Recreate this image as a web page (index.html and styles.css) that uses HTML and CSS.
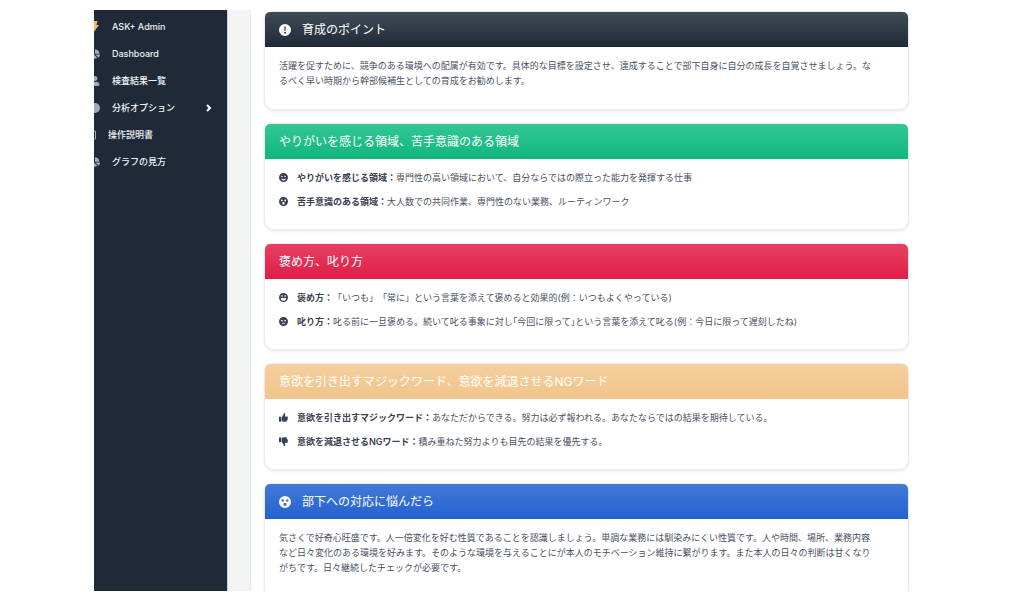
FILE: index.html
```html
<!DOCTYPE html>
<html lang="ja">
<head>
<meta charset="utf-8">
<title>ASK+ Admin</title>
<link rel="stylesheet" href="styles.css">
</head>
<body>
<svg class="defs" aria-hidden="true">
  <symbol id="pie" viewBox="0 0 544 512"><path d="M527.79 288H290.5l158.03 158.03c6.04 6.04 15.98 6.53 22.19.68 38.7-36.46 65.32-85.61 73.13-140.86 1.34-9.46-6.51-17.85-16.06-17.85zm-15.83-64.8C503.72 103.74 408.26 8.28 288.8.04 279.68-.59 272 7.1 272 16.24V240h223.77c9.14 0 16.82-7.68 16.19-16.8zM224 288V50.71c0-9.55-8.39-17.4-17.84-16.06C86.99 51.49-4.1 155.6.14 280.37 4.5 408.51 114.83 513.59 243.03 511.98c50.4-.63 96.97-16.87 135.26-44.03 7.9-5.6 8.42-17.23 1.57-24.08L224 288z"/></symbol>
  <symbol id="user" viewBox="0 0 448 512"><path d="M224 256c70.7 0 128-57.3 128-128S294.7 0 224 0 96 57.3 96 128s57.3 128 128 128zm89.6 32h-16.7c-22.2 10.2-46.9 16-72.9 16s-50.6-5.8-72.9-16h-16.7C60.2 288 0 348.2 0 422.4V464c0 26.5 21.5 48 48 48h352c26.5 0 48-21.5 48-48v-41.6c0-74.2-60.2-134.4-134.4-134.4z"/></symbol>
  <symbol id="bolt" viewBox="0 0 10 12"><path d="M3 0h5.500L7.500 4H10L4 12 5 7H1.500z"/></symbol>
  <symbol id="disc" viewBox="0 0 10 10"><circle cx="5" cy="5" r="5"/></symbol>
  <symbol id="book" viewBox="0 0 10 10"><path d="M2 1h7.500v8H2z" fill="none" stroke="currentColor"/></symbol>
  <symbol id="exclaim" viewBox="0 0 24 24"><path fill-rule="evenodd" d="M12 0a12 12 0 1 0 0 24 12 12 0 0 0 0-24zM10.500 5h3l-.5 9h-2zM12 15.500a2 2 0 1 1 0 4 2 2 0 0 1 0-4z"/></symbol>
  <symbol id="smile" viewBox="0 0 24 24"><path fill-rule="evenodd" d="M12 0a12 12 0 1 0 0 24 12 12 0 0 0 0-24zM8 7a2 2 0 1 1 0 4 2 2 0 0 1 0-4zM16 7a2 2 0 1 1 0 4 2 2 0 0 1 0-4zM5.500 14.500q6.500 4 13 0-1.500 5.500-6.500 5.500t-6.500-5.500z"/></symbol>
  <symbol id="surprise" viewBox="0 0 24 24"><path fill-rule="evenodd" d="M12 0a12 12 0 1 0 0 24 12 12 0 0 0 0-24zM7.500 6.500a2.500 2.500 0 1 1 0 5 2.500 2.500 0 0 1 0-5zM16.500 6.500a2.500 2.500 0 1 1 0 5 2.500 2.500 0 0 1 0-5zM12 13.500a3.200 3.200 0 1 1 0 6.400 3.200 3.200 0 0 1 0-6.400z"/></symbol>
  <symbol id="grin" viewBox="0 0 24 24"><path fill-rule="evenodd" d="M12 0a12 12 0 1 0 0 24 12 12 0 0 0 0-24zM5 7.500q3-3 5.500 0v2H5zM13.500 7.500q3-3 5.500 0v2h-5.500zM4.500 13h15q-1 7.500-7.500 7.500T4.500 13z"/></symbol>
  <symbol id="angry" viewBox="0 0 24 24"><path fill-rule="evenodd" d="M12 0a12 12 0 1 0 0 24 12 12 0 0 0 0-24zM5 7l5.500 2.500q-.5 3-2.500 3t-2.500-3zM19 7l-5.500 2.500q.5 3 2.500 3t2.500-3zM7.500 18q4.500-5 9 0l-1 1q-3.500-3-7 0z"/></symbol>
  <symbol id="thumb" viewBox="0 0 24 24"><path d="M0 10h5.500v13H0zM7 11l4.500-5.500 1-4Q13-1 15.500 1q2.500 2.500 0 8H22q3 1.500 1 4 1.500 2-.5 4 .5 2-1.500 3 0 3.500-3 3.500h-5q-3 0-6-2z"/></symbol>
</svg>
<div class="app">
  <nav class="sidebar">
    <a class="nav-link brand" href="#"><svg class="nav-icon"><use href="#bolt"/></svg>ASK+ Admin</a>
    <a class="nav-link" href="#"><svg class="nav-icon"><use href="#pie"/></svg>Dashboard</a>
    <a class="nav-link" href="#"><svg class="nav-icon"><use href="#user"/></svg>検査結果一覧</a>
    <a class="nav-link" href="#"><svg class="nav-icon"><use href="#disc"/></svg>分析オプション<svg class="chevron" viewBox="0 0 6 8"><path d="M1 1l3 3-3 3"/></svg></a>
    <a class="nav-link compact" href="#"><svg class="nav-icon"><use href="#book"/></svg>操作説明書</a>
    <a class="nav-link" href="#"><svg class="nav-icon"><use href="#pie"/></svg>グラフの見方</a>
  </nav>
  <div class="gutter"></div>
  <main class="content">
    <section class="card">
      <h2 class="card-header dark"><svg class="head-icon"><use href="#exclaim"/></svg>育成のポイント</h2>
      <div class="card-body">
        <p class="prose">活躍を促すために、競争のある環境への配属が有効です。具体的な目標を設定させ、達成することで部下自身に自分の成長を自覚させましょう。なるべく早い時期から幹部候補生としての育成をお勧めします。</p>
      </div>
    </section>
    <section class="card">
      <h2 class="card-header green">やりがいを感じる領域、苦手意識のある領域</h2>
      <ul class="card-body">
        <li><svg class="item-icon"><use href="#smile"/></svg><span><b>やりがいを感じる領域：</b>専門性の高い領域において、自分ならではの際立った能力を発揮する仕事</span></li>
        <li><svg class="item-icon"><use href="#surprise"/></svg><span><b>苦手意識のある領域：</b>大人数での共同作業、専門性のない業務、ルーティンワーク</span></li>
      </ul>
    </section>
    <section class="card">
      <h2 class="card-header red">褒め方、叱り方</h2>
      <ul class="card-body">
        <li><svg class="item-icon"><use href="#grin"/></svg><span><b>褒め方：</b>「いつも」「常に」という言葉を添えて褒めると効果的(例：いつもよくやっている)</span></li>
        <li><svg class="item-icon"><use href="#angry"/></svg><span><b>叱り方：</b>叱る前に一旦褒める。続いて叱る事象に対し｢今回に限って｣という言葉を添えて叱る(例：今日に限って遅刻したね)</span></li>
      </ul>
    </section>
    <section class="card">
      <h2 class="card-header sand">意欲を引き出すマジックワード、意欲を減退させるNGワード</h2>
      <ul class="card-body">
        <li><svg class="item-icon"><use href="#thumb"/></svg><span><b>意欲を引き出すマジックワード：</b>あなただからできる。努力は必ず報われる。あなたならではの結果を期待している。</span></li>
        <li><svg class="item-icon down"><use href="#thumb"/></svg><span><b>意欲を減退させるNGワード：</b>積み重ねた努力よりも目先の結果を優先する。</span></li>
      </ul>
    </section>
    <section class="card">
      <h2 class="card-header blue"><svg class="head-icon"><use href="#surprise"/></svg>部下への対応に悩んだら</h2>
      <div class="card-body">
        <p class="prose">気さくで好奇心旺盛です。人一倍変化を好む性質であることを認識しましょう。単調な業務には馴染みにくい性質です。人や時間、場所、業務内容など日々変化のある環境を好みます。そのような環境を与えることにが本人のモチベーション維持に繋がります。また本人の日々の判断は甘くなりがちです。日々継続したチェックが必要です。</p>
      </div>
    </section>
  </main>
</div>
</body>
</html>
```
FILE: styles.css
```css
* { box-sizing: border-box; }
body {
  margin: 0;
  background: #fff;
  color: #4a5163;
  font: 9px/15px Inter, "Noto Sans CJK JP", sans-serif;
  text-spacing-trim: space-all;
}
.defs { position: absolute; width: 0; height: 0; }
svg { fill: currentColor; flex: none; }
.app {
  display: flex;
  height: calc(100vh - 20px);
  margin: 10px 94px;
  overflow: hidden;
}
.sidebar {
  flex: 0 0 134px;
  padding-top: 3px;
  overflow: hidden;
  background: #202937;
  border-right: 1px solid #c9cdd3;
}
.nav-link {
  display: flex;
  align-items: center;
  gap: 12px;
  height: 27px;
  padding-right: 15px;
  color: #f0f2f5;
  font-weight: 500;
  text-decoration: none;
}
.nav-icon { width: 10px; height: 10px; margin-left: -4px; color: #a3aab6; }
.brand .nav-icon { color: #f5b866; height: 12px; margin-left: -5px; margin-right: 1px; }
.compact .nav-icon { margin-left: -8px; }
.chevron {
  width: 6px;
  height: 8px;
  margin-left: auto;
  fill: none;
  stroke: #fff;
  stroke-width: 2;
}
.gutter { flex: 0 0 23px; background: #f2f4f6; border-right: 1px solid #e8eaed; }
.content {
  flex: 1;
  display: flex;
  flex-direction: column;
  gap: 15px;
  padding: 2px 22px 0 14px;
}
.card {
  flex: none;
  border-radius: 8px;
  box-shadow: 0 0 0 1px #e9ebee, 0 1px 3px 1px #e6e8ec;
}
.card-header {
  display: flex;
  align-items: center;
  gap: 11px;
  height: 35px;
  margin: 0;
  padding: 0 14px;
  border-radius: 5px 5px 0 0;
  color: #fff;
  font-size: 12px;
  font-weight: 400;
}
.dark { background: linear-gradient(#414b57, #202937); }
.green { background: linear-gradient(#34c795, #10b67d); }
.red { background: linear-gradient(#e64062, #e11d48); }
.sand { background: linear-gradient(#f5cf9e, #f1c58b); }
.blue { background: linear-gradient(#437ad8, #2361ce); }
.head-icon { width: 12px; height: 12px; }
.card-body { margin: 0; padding: 11px 14px 21px; }
ul.card-body { display: grid; gap: 9px; padding-bottom: 20px; list-style: none; }
li { display: flex; align-items: center; gap: 9px; }
.item-icon { width: 9px; height: 9px; color: #374151; }
.down { transform: rotate(180deg) scaleX(-1); }
b { color: #374151; font-weight: 600; }
.prose { max-width: 66em; margin: 0; }
```
